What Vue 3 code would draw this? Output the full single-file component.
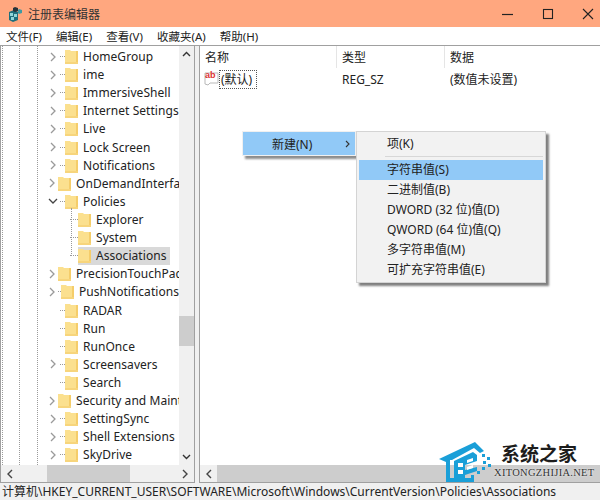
<template>
  <div class="win">
    <header class="titlebar">
      <svg class="app-icon" width="18" height="18" viewBox="0 0 18 18">
        <path d="M2 7l5-2 4 2v8l-5 2-4-2z" fill="#1d6f7c" />
        <path d="M3 8h3v3H3zM7 9h3v3H7zM4 12h3v3H4z" fill="#8fd6d8" />
        <path d="M8 2l3 1v3l-3 1-2-1V3z" fill="#26333a" />
        <path d="M12 4l3 1v3l-3 1-1-1V5z" fill="#3f9aa3" />
      </svg>
      <span class="title">注册表编辑器</span>
      <div class="controls">
        <svg width="14" height="14" viewBox="0 0 14 14"><path d="M1 7.5h11" stroke="#222" stroke-width="1.2" /></svg>
        <svg width="14" height="14" viewBox="0 0 14 14"><rect x="2.5" y="2.5" width="9" height="9" fill="none" stroke="#222" stroke-width="1.1" /></svg>
        <svg width="14" height="14" viewBox="0 0 14 14"><path d="M2 2l10 10M12 2L2 12" stroke="#222" stroke-width="1.1" /></svg>
      </div>
    </header>

    <nav class="menubar">
      <span v-for="m in menus" :key="m">{{ m }}</span>
    </nav>

    <main class="panes">
      <section class="tree-pane">
        <div class="tree-body">
          <div class="tree">
            <div class="guide g1"></div>
            <div class="guide g2"></div>
            <div class="guide g3"></div>
            <div v-for="r in rows" :key="r.name" class="row" :class="{ child: r.child }">
              <span class="twisty">
                <svg v-if="r.arrow === 'closed'" width="8" height="10" viewBox="0 0 8 10"><path d="M2 1l4 4-4 4" fill="none" stroke="#9a9a9a" stroke-width="1.3" /></svg>
                <svg v-else-if="r.arrow === 'open'" width="10" height="8" viewBox="0 0 10 8"><path d="M1 2l4 4 4-4" fill="none" stroke="#444" stroke-width="1.3" /></svg>
              </span>
              <span class="dash"></span>
              <span class="item" :class="{ selected: r.selected }">
                <svg class="folder" width="13" height="15" viewBox="0 0 13 15">
                  <path d="M0 1h5l1 1h7v13H0z" fill="#fbe08f" />
                  <path d="M11 2h2v13h-2z" fill="#f5cd6a" />
                  <path d="M0 13h13v2H0z" fill="#f7d57c" />
                </svg>
                <span class="label">{{ r.name }}</span>
              </span>
            </div>
            <div class="branch"></div>
          </div>
          <div class="vscroll">
            <svg width="15" height="16" viewBox="0 0 15 16"><path d="M4 10l3.5-3.5L11 10" fill="none" stroke="#333" stroke-width="1.4" /></svg>
            <div class="vtrack"><div class="vthumb"></div></div>
            <svg width="15" height="16" viewBox="0 0 15 16"><path d="M4 6l3.5 3.5L11 6" fill="none" stroke="#333" stroke-width="1.4" /></svg>
          </div>
        </div>
        <div class="hscroll">
          <svg width="17" height="16" viewBox="0 0 17 16"><path d="M11 4L7 8l4 4" fill="none" stroke="#444" stroke-width="1.4" /></svg>
          <div class="htrack left"><div class="hthumb"></div></div>
          <svg width="17" height="16" viewBox="0 0 17 16"><path d="M6 4l4 4-4 4" fill="none" stroke="#444" stroke-width="1.4" /></svg>
        </div>
      </section>

      <section class="list-pane">
        <div class="list-head">
          <span class="col c1">名称</span>
          <span class="col c2">类型</span>
          <span class="col c3">数据</span>
        </div>
        <div class="list-row">
          <span class="c1 name-cell">
            <svg width="15" height="16" viewBox="0 0 15 16">
              <path d="M1 2h13v10H6l-2 2-3-1z" fill="#fff" stroke="#b9b9b9" />
            </svg>
            <b class="ab">ab</b>
            <span class="focus">(默认)</span>
          </span>
          <span class="c2 cell">REG_SZ</span>
          <span class="c3 cell">(数值未设置)</span>
        </div>
        <div class="list-fill"></div>
        <div class="hscroll">
          <svg width="17" height="16" viewBox="0 0 17 16"><path d="M11 4L7 8l4 4" fill="none" stroke="#444" stroke-width="1.4" /></svg>
          <div class="htrack"><div class="hthumb wide"></div></div>
        </div>
      </section>
    </main>

    <footer class="statusbar">计算机\HKEY_CURRENT_USER\SOFTWARE\Microsoft\Windows\CurrentVersion\Policies\Associations</footer>

    <div class="ctx">
      <span>新建(N)</span>
      <svg width="6" height="8" viewBox="0 0 6 8"><path d="M1 1l3 3-3 3" fill="none" stroke="#333" stroke-width="1.1" /></svg>
    </div>
    <div class="sub">
      <div class="sub-item">项(K)</div>
      <div class="sep"></div>
      <div v-for="s in subItems" :key="s" class="sub-item" :class="{ hot: s === '字符串值(S)' }">{{ s }}</div>
    </div>

    <div class="mark">
      <svg width="62" height="46" viewBox="0 0 62 46">
        <path d="M0 19L36 2l9 9-4 2-6-5L13 20h-2v18h24v4H7V22z" fill="#1a9fd8" />
        <path d="M15 21l19-9 4 3v6l-12 4v5l12-3v4l-12 4v3H15z" fill="#1a9fd8" />
        <path d="M19 23h5v4h-5zM19 30h5v4h-5zM28 20l6-2v3l-6 2zM28 27l6-2v3l-6 2z" fill="#fff" />
        <path d="M43 14h3v3h-3zM48 17h3v3h-3zM44 21h3v3h-3zM49 24h3v3h-3zM43 27h3v3h-3zM38 31h3v3h-3zM32 35h3v3h-3z" fill="#1a9fd8" />
      </svg>
      <div class="brand">系统之家</div>
      <div class="brand-en">XITONGZHIJIA.NET</div>
    </div>
  </div>
</template>

<script setup>
const menus = ['文件(F)', '编辑(E)', '查看(V)', '收藏夹(A)', '帮助(H)']

const names = [
  'HomeGroup', 'ime', 'ImmersiveShell', 'Internet Settings', 'Live', 'Lock Screen',
  'Notifications', 'OnDemandInterface'
]
const after = [
  'PrecisionTouchPad', 'PushNotifications', 'RADAR', 'Run', 'RunOnce', 'Screensavers',
  'Search', 'Security and Maintenance', 'SettingSync', 'Shell Extensions', 'SkyDrive'
]
const leaves = ['RADAR', 'Run', 'RunOnce', 'Search']

const rows = [
  ...names.map(name => ({ name, arrow: 'closed' })),
  { name: 'Policies', arrow: 'open' },
  { name: 'Explorer', child: true },
  { name: 'System', child: true },
  { name: 'Associations', child: true, selected: true },
  ...after.map(name => ({ name, arrow: leaves.includes(name) ? '' : 'closed' }))
]

const subItems = [
  '字符串值(S)', '二进制值(B)', 'DWORD (32 位)值(D)', 'QWORD (64 位)值(Q)', '多字符串值(M)', '可扩充字符串值(E)'
]
</script>

<style>
html, body { margin: 0; background: #fff; }
</style>

<style scoped>
.win {
  position: relative;
  width: 600px;
  height: 500px;
  overflow: hidden;
  display: flex;
  flex-direction: column;
  background: #fff;
  color: #222;
  font: 12px "Noto Sans", "Noto Sans CJK SC", sans-serif;
}

/* title + menu */
.titlebar {
  height: 27px;
  flex: none;
  background: #ffa77f;
  display: flex;
  align-items: center;
  padding-left: 7px;
  box-sizing: border-box;
}
.app-icon { margin-right: 3px; }
.title { font-size: 12px; color: #333; }
.controls {
  margin-left: auto;
  display: flex;
  gap: 26px;
  padding-right: 5px;
}
.menubar {
  height: 18px;
  flex: none;
  display: flex;
  gap: 14px;
  align-items: center;
  padding-left: 6px;
  font-size: 11.5px;
  border-bottom: 1px solid #a0a0a0;
  box-sizing: content-box;
}

/* panes */
.panes {
  flex: 1;
  min-height: 0;
  display: grid;
  grid-template-columns: 195px 1fr;
  gap: 4px;
  background: #f0f0f0;
}
.tree-pane, .list-pane {
  background: #fff;
  display: flex;
  flex-direction: column;
  min-height: 0;
  box-sizing: border-box;
}
.tree-pane { border-left: 1px solid #a0a0a0; border-right: 1px solid #a0a0a0; border-bottom: 1px solid #a0a0a0; }
.list-pane { border-left: 1px solid #a0a0a0; border-bottom: 1px solid #a0a0a0; }
.tree-body { flex: 1; min-height: 0; display: flex; }
.tree {
  position: relative;
  flex: 1;
  min-width: 0;
  overflow: hidden;
  padding-top: 1.5px;
}
.guide {
  position: absolute;
  top: 0;
  bottom: 0;
  border-left: 1px dotted #9a9a9a;
}
.g1 { left: 1px; }
.g2 { left: 18px; }
.g3 { left: 36px; }
.row {
  height: 18.12px;
  display: flex;
  align-items: center;
  padding-left: 47px;
  white-space: nowrap;
}
.twisty {
  width: 10px;
  height: 10px;
  display: flex;
  align-items: center;
  justify-content: center;
}
.dash {
  width: 5px;
  margin-left: 2px;
  margin-right: 0;
  border-top: 1px dotted #999;
}
.row.child .twisty { visibility: hidden; }
.row.child .dash { width: 8px; margin-left: 12px; }
.row.child .item { margin-left: 0; }
.item {
  display: flex;
  align-items: center;
  height: 18px;
  padding-left: 0;
  margin-left: 0;
}
.item.selected { background: #d9d9d9; padding-right: 4px; }
.folder { flex: none; margin-right: 5px; }
.label { font-size: 12px; color: #222; letter-spacing: 0.05px; }
.branch {
  position: absolute;
  left: 70px;
  top: 162px;
  height: 48px;
  border-left: 1px dotted #999;
}
.vscroll {
  width: 15px;
  flex: none;
  background: #f0f0f0;
  display: flex;
  flex-direction: column;
}
.vtrack { flex: 1; position: relative; }
.vthumb {
  position: absolute;
  left: 0;
  right: 0;
  top: 254px;
  height: 30px;
  background: #cdcdcd;
}
.hscroll {
  height: 17px;
  flex: none;
  background: #f0f0f0;
  display: flex;
  align-items: center;
}
.htrack { flex: 1; height: 100%; position: relative; }
.htrack.left { padding-left: 29px; box-sizing: border-box; }
.hthumb { width: 83px; height: 100%; background: #cdcdcd; }
.hthumb.wide { width: 100%; }

/* list */
.list-head {
  height: 22px;
  flex: none;
  display: flex;
  align-items: center;
}
.col { height: 100%; display: flex; align-items: center; box-sizing: border-box; padding-left: 5px; border-right: 1px solid #e5e5e5; }
.c1 { width: 137px; flex: none; }
.c2 { width: 108px; flex: none; }
.c3 { flex: 1; border-right: none; }
.col.c1 { padding-left: 5px; }
.list-row {
  height: 22px;
  flex: none;
  display: flex;
  align-items: center;
}
.name-cell { position: relative; display: flex; align-items: center; padding-left: 4px; box-sizing: border-box; }
.ab {
  position: absolute;
  left: 5px;
  top: 0;
  font: bold 9px "Liberation Sans", sans-serif;
  color: #d33;
}
.focus { border: 1px dotted #555; padding: 1px 4px 1px 1px; line-height: 15px; }
.cell { padding-left: 5px; box-sizing: border-box; }
.list-fill { flex: 1; }

/* status */
.statusbar {
  height: 17px;
  flex: none;
  padding-left: 2px;
  line-height: 17px;
  font-size: 12px;
  background: #f0f0f0;
  white-space: nowrap;
  overflow: hidden;
}

/* context menus */
.ctx {
  position: absolute;
  left: 242px;
  top: 131px;
  width: 114px;
  height: 25px;
  box-sizing: border-box;
  background: #91c9f7;
  border: 1px solid #f0f0f0;
  box-shadow: 3px 3px 2px rgba(0, 0, 0, 0.45);
  display: flex;
  align-items: center;
  justify-content: space-between;
  padding: 0 4px 0 29px;
}
.sub {
  position: absolute;
  left: 356px;
  top: 131px;
  width: 190px;
  height: 152px;
  box-sizing: border-box;
  padding: 2px;
  background: #f2f2f2;
  border: 1px solid #d4d4d4;
  box-shadow: 3px 3px 2px rgba(0, 0, 0, 0.5);
}
.sub-item {
  height: 20px;
  line-height: 20px;
  padding-left: 28px;
}
.sub-item.hot { background: #91c9f7; }
.sep {
  height: 1px;
  margin: 2px 0 3px 26px;
  background: #d7d7d7;
}

/* watermark */
.mark {
  position: absolute;
  left: 439px;
  top: 440px;
  width: 161px;
  height: 60px;
}
.mark svg { position: absolute; left: 0; top: 0; }
.brand {
  position: absolute;
  left: 62px;
  top: 0;
  font: bold 19px/26px "Noto Sans CJK SC", sans-serif;
  color: #1c1c1c;
  letter-spacing: 0;
  text-shadow: 0 0 2px #fff;
}
.brand-en {
  position: absolute;
  left: 55px;
  top: 27px;
  font: 10.5px "Liberation Serif", serif;
  color: #333;
  letter-spacing: 0.3px;
  text-shadow: 0 0 2px #fff;
}
</style>
